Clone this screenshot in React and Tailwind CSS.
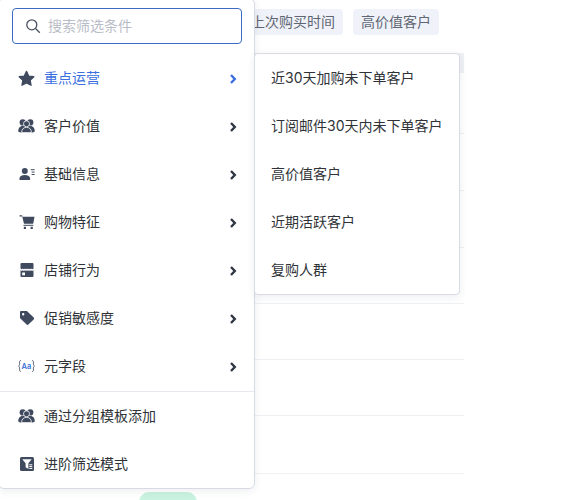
import React from "react";

const font = "font-['Inter','Noto_Sans_CJK_SC',sans-serif]";
const ic = "#3f4a5f";

const Star = () => (
  <svg width="17" height="17" viewBox="0 0 16 16" fill={ic} stroke={ic} strokeWidth="1.200" strokeLinejoin="round">
    <path d="M8 1.300l2.100 4.400 4.800.6-3.500 3.300.9 4.800L8 12.100l-4.300 2.300.9-4.800L1.100 6.300l4.800-.6z" />
  </svg>
);

const Users = () => (
  <svg width="17" height="16" viewBox="0 0 17 16" fill={ic}>
    <circle cx="4.700" cy="4.400" r="3.100" />
    <circle cx="12.300" cy="4.400" r="3.100" />
    <path d="M0.200 13.600c0-3.500 1.700-5.600 4.300-5.600h8c2.600 0 4.300 2.100 4.300 5.600l-2 .8H2.200z" />
    <circle cx="8.500" cy="5.800" r="3" stroke="#ffffff" strokeWidth=".8" />
    <path d="M3.600 14.600c0-3.400 1.900-5.200 4.900-5.200s4.900 1.800 4.900 5.200z" stroke="#ffffff" strokeWidth=".8" />
  </svg>
);

const UserList = () => (
  <svg width="16" height="16" viewBox="0 0 16 16" fill={ic}>
    <circle cx="5.800" cy="4.900" r="3" />
    <path d="M0.500 14v-1.400C0.500 10.200 2.600 9 5.800 9s5.300 1.200 5.300 3.600V14z" />
    <rect x="11.800" y="3.200" width="3.800" height="1" />
    <rect x="12.600" y="5.600" width="3" height="1" />
    <rect x="12.600" y="8" width="3" height="1" />
  </svg>
);

const Cart = () => (
  <svg width="16" height="16" viewBox="0 0 16 16" fill={ic}>
    <path d="M0.500 1.200H3l.5 1.500h12l-1.300 7H5l-1.800-7.300H0.500z" />
    <rect x="4.500" y="10.800" width="9.800" height="1" />
    <rect x="4.800" y="12.800" width="2.200" height="2.200" />
    <rect x="11.600" y="12.800" width="2.200" height="2.200" />
  </svg>
);

const Store = () => (
  <svg width="16" height="16" viewBox="0 0 16 16" fill={ic}>
    <path d="M2.500 1h11a1 1 0 0 1 1 1v4.400c-.8 1-1.600 1-2.300 0-.7 1-1.500 1-2.200 0-.7 1-1.300 1-2 0-.7 1-1.300 1-2 0-.7 1-1.500 1-2.200 0-.7 1-1.500 1-2.300 0V2a1 1 0 0 1 1-1z" />
    <path d="M1.500 8.300c.8.700 1.600.7 2.300 0 .7.700 1.500.7 2.200 0 .7.700 1.300.7 2 0 .7.700 1.300.7 2 0 .7.700 1.500.7 2.200 0 .7.700 1.500.7 2.300 0V14a1 1 0 0 1-1 1h-11a1 1 0 0 1-1-1z" />
    <rect x="3.200" y="10.500" width="2.800" height="2.800" fill="#ffffff" />
  </svg>
);

const Tag = () => (
  <svg width="16" height="16" viewBox="0 0 16 16" fill={ic}>
    <path fillRule="evenodd" d="M2.200 1h5.200c.4 0 .8.200 1 .4l6.300 6.200c.5.500.5 1.300 0 1.800l-5.300 5.200c-.5.500-1.300.5-1.800 0L1.400 8.400C1.200 8.200 1 7.800 1 7.400V2.200C1 1.500 1.500 1 2.200 1zM4.200 3a1.200 1.200 0 1 0 0 2.400 1.200 1.200 0 0 0 0-2.400z" />
  </svg>
);

const Filter = () => (
  <svg width="16" height="16" viewBox="0 0 16 16">
    <rect x="1" y="1" width="14" height="14" rx="1.500" fill={ic} />
    <path d="M3.300 3.200h9.400L9.400 7.300V13L6.600 11.300V7.300z" fill="#ffffff" />
    <rect x="10.300" y="8.300" width="3" height="1" fill="#ffffff" />
    <rect x="10.300" y="10.100" width="3" height="1" fill="#ffffff" />
    <rect x="10.300" y="11.900" width="3" height="1" fill="#ffffff" />
  </svg>
);

const Meta = () => (
  <svg width="17" height="16" viewBox="0 0 17 16" fill="none">
    <path d="M3 2.500c-1.200 0-1.400.6-1.400 1.500v2.200c0 .8-.3 1.500-1.100 1.800.8.300 1.100 1 1.100 1.800V12c0 .9.200 1.500 1.400 1.500" stroke={ic} strokeWidth=".8" />
    <path d="M14 2.500c1.200 0 1.400.6 1.400 1.500v2.200c0 .8.300 1.500 1.100 1.800-.8.300-1.100 1-1.100 1.800V12c0 .9-.2 1.500-1.400 1.500" stroke={ic} strokeWidth=".8" />
    <text x="8.500" y="10.600" textAnchor="middle" fontSize="7.500" fontWeight="600" fill="#3b6fd8" fontFamily="Inter, sans-serif">Aa</text>
  </svg>
);

const Chevron = ({ active }) => (
  <svg className="mt-[2px]" width="8" height="10" viewBox="0 0 8 10" fill="none" stroke={active ? "#3b6fe0" : "#2f3542"} strokeWidth="2.400">
    <path d="M2 1l3.800 4L2 9" />
  </svg>
);

const cats = [
  { label: "重点运营", icon: <Star />, active: true },
  { label: "客户价值", icon: <Users /> },
  { label: "基础信息", icon: <UserList /> },
  { label: "购物特征", icon: <Cart /> },
  { label: "店铺行为", icon: <Store /> },
  { label: "促销敏感度", icon: <Tag /> },
  { label: "元字段", icon: <Meta /> },
];

const subs = ["近30天加购未下单客户", "订阅邮件30天内未下单客户", "高价值客户", "近期活跃客户", "复购人群"];

export default function App() {
  return (
    <div className={`relative h-[500px] w-[566px] overflow-hidden bg-white ${font}`}>
      {/* underlying page */}
      <div className="flex w-[464px] flex-col pt-[9px]">
        <div className="flex gap-[10px] pl-[243px] text-sm">
          <span className="flex h-[26px] items-center rounded bg-[#f0f2f9] px-2 text-[#5f6673]">上次购买时间</span>
          <span className="flex h-[26px] items-center rounded bg-[#f0f2f9] px-2 text-[#5f6673]">高价值客户</span>
        </div>
        <div className="mt-[18px] h-[20px] bg-[#f0f1f5]" />
        <div className="flex flex-col">
          {[61, 57, 57, 56, 56, 56, 58].map((h, i) => (
            <div key={i} className="border-b border-[#eef0f4]" style={{ height: h }} />
          ))}
        </div>
        <div className="ml-[139px] mt-[18px] h-5 w-[58px] rounded-full bg-[#c9f2e0]" />
      </div>

      {/* cascader menu */}
      <div className="absolute left-[-2px] top-[-2px] h-[491px] w-[257px] rounded-md border border-[#d8dae6] bg-white shadow-[0_2px_8px_rgba(30,40,70,0.08)]">
        <div className="pl-[13px] pr-[12px] pt-[9px]">
          <div className="flex h-[36px] items-center gap-[7px] rounded border border-[#3b6cc4] px-3">
            <svg width="16" height="16" viewBox="0 0 16 16" fill="none" stroke="#4a5260" strokeWidth="1.300">
              <circle cx="6.800" cy="6.800" r="5" />
              <path d="M10.500 10.500l4.300 4.300" />
            </svg>
            <span className="text-sm text-[#b9bdc7]">搜索筛选条件</span>
          </div>
        </div>
        <div className="mb-[1px] mt-[10px]">
          {cats.map((c) => (
            <div key={c.label} className="flex h-[48px] items-center pl-[19px] pr-[17px]">
              <span className="flex w-[17px] justify-center">{c.icon}</span>
              <span className={`ml-[9px] flex-1 text-sm ${c.active ? "text-[#3b6fe0]" : "text-[#2f3338]"}`}>{c.label}</span>
              <Chevron active={c.active} />
            </div>
          ))}
        </div>
        <div className="border-t border-[#e8e9ef]">
          {[
            { label: "通过分组模板添加", icon: <Users /> },
            { label: "进阶筛选模式", icon: <Filter /> },
          ].map((c) => (
            <div key={c.label} className="flex h-[48px] items-center pl-[19px]">
              <span className="flex w-[17px] justify-center">{c.icon}</span>
              <span className="ml-[9px] text-sm text-[#2f3338]">{c.label}</span>
            </div>
          ))}
        </div>
      </div>

      {/* sub menu */}
      <div className="absolute left-[254px] top-[53px] h-[242px] w-[206px] rounded border border-[#d8dae6] bg-white shadow-[0_2px_8px_rgba(30,40,70,0.08)]">
        {subs.map((s) => (
          <div key={s} className="flex h-[48px] items-center whitespace-nowrap pl-4 text-sm text-[#2f3338]">{s}</div>
        ))}
      </div>
    </div>
  );
}
